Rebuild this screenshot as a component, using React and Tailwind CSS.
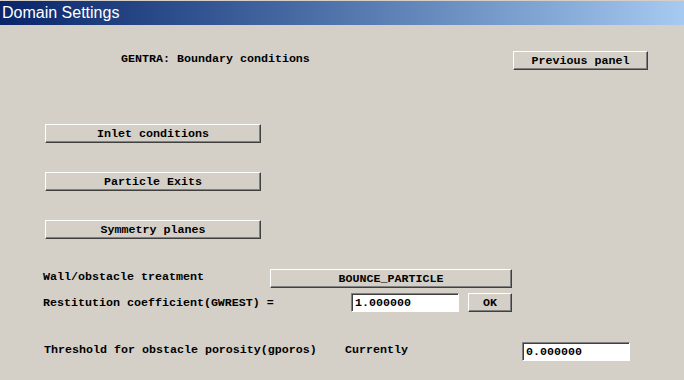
const mono = "font-['Liberation_Mono',monospace] font-bold text-[11.67px] leading-[14px] text-black";

const btn =
  "h-[19px] bg-[#d4d0c8] border-t border-l border-t-white border-l-white border-b border-r border-b-[#404040] border-r-[#404040] shadow-[inset_-1px_-1px_0_#808080] flex items-center justify-center " +
  mono;

const field =
  "h-[19px] bg-white border-t border-l border-t-[#808080] border-l-[#808080] border-b border-r border-b-white border-r-white shadow-[inset_1px_1px_0_#404040] flex items-center pl-[3px] " +
  mono;

export default function App() {
  return (
    <div className="w-[684px] h-[380px] bg-[#d4d0c8] overflow-hidden">
      <div className="h-[25px] border-t border-t-[#d4d0c8] bg-gradient-to-r from-[#0a246a] to-[#a6caf0] flex items-center pl-[2px]">
        <span className="font-['Liberation_Sans',sans-serif] text-[16px] text-white leading-none">Domain Settings</span>
      </div>

      <div className="flex items-center mt-[26px]">
        <span className={"ml-[121px] w-[392px] mb-[4px] " + mono}>GENTRA: Boundary conditions</span>
        <div className={btn + " w-[135px]"}>Previous panel</div>
      </div>

      <div className="flex flex-col gap-[29px] ml-[45px] mt-[54px]">
        <div className={btn + " w-[216px]"}>Inlet conditions</div>
        <div className={btn + " w-[216px]"}>Particle Exits</div>
        <div className={btn + " w-[216px]"}>Symmetry planes</div>
      </div>

      <div className="flex items-center mt-[30px]">
        <span className={"ml-[43px] w-[227px] mb-[4px] " + mono}>Wall/obstacle treatment</span>
        <div className={btn + " w-[242px]"}>BOUNCE_PARTICLE</div>
      </div>

      <div className="flex items-center mt-[5px]">
        <span className={"ml-[43px] w-[308px] " + mono}>Restitution coefficient(GWREST) =</span>
        <div className={field + " w-[108px]"}>1.000000</div>
        <div className={btn + " w-[44px] ml-[9px]"}>OK</div>
      </div>

      <div className="flex items-center mt-[30px]">
        <span className={"ml-[44px] w-[301px] mb-[4px] " + mono}>Threshold for obstacle porosity(gporos)</span>
        <span className={"w-[177px] mb-[4px] " + mono}>Currently</span>
        <div className={field + " w-[108px]"}>0.000000</div>
      </div>
    </div>
  );
}
